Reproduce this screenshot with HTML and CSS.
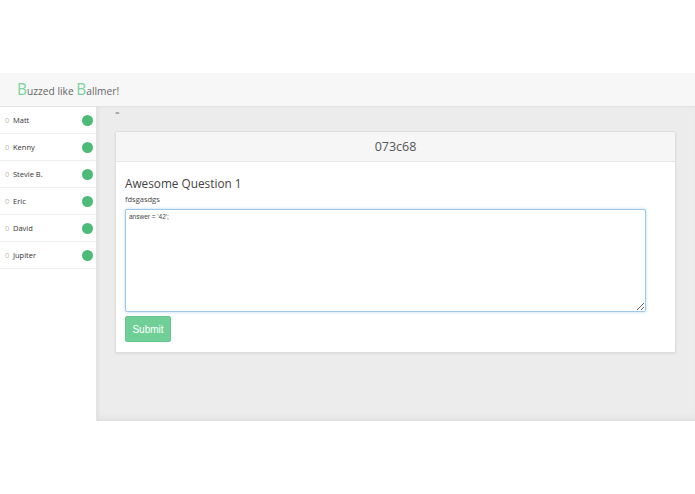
FILE: index.html
```html
<!DOCTYPE html>
<html>
<head>
<meta charset="utf-8">
<link rel="stylesheet" href="styles.css">
</head>
<body>
<div class="top-space"></div>
<header class="navbar">
  <span class="brand"><span class="big">B</span>uzzed like <span class="big">B</span>allmer!</span>
</header>
<div class="layout">
  <aside class="sidebar">
    <div class="player"><span class="score">0</span><span class="name">Matt</span><span class="dot"></span></div>
    <div class="player"><span class="score">0</span><span class="name">Kenny</span><span class="dot"></span></div>
    <div class="player"><span class="score">0</span><span class="name">Stevie B.</span><span class="dot"></span></div>
    <div class="player"><span class="score">0</span><span class="name">Eric</span><span class="dot"></span></div>
    <div class="player"><span class="score">0</span><span class="name">David</span><span class="dot"></span></div>
    <div class="player"><span class="score">0</span><span class="name">Jupiter</span><span class="dot"></span></div>
  </aside>
  <main class="main">
    <div class="eq">=</div>
    <section class="card">
      <div class="card-head">073c68</div>
      <div class="card-body">
        <h2 class="q-title">Awesome Question 1</h2>
        <p class="q-desc">fdsgasdgs</p>
        <textarea class="answer">answer = '42';</textarea>
        <button class="submit">Submit</button>
      </div>
    </section>
  </main>
</div>
</body>
</html>
```

FILE: styles.css
```css
html, body {
  margin: 0;
  padding: 0;
  background: #ffffff;
}
body {
  font-family: "Open Sans", "Liberation Sans", sans-serif;
  color: #555;
}
.top-space {
  height: 73px;
}
.navbar {
  background: #f7f7f7;
  border-bottom: 1px solid #e3e3e3;
  display: flex;
  align-items: center;
  padding-left: 17px;
  box-sizing: border-box;
  height: 34px;
}
.brand {
  font-size: 10.2px;
  color: #666;
  padding-bottom: 1px;
}
.brand .big {
  font-size: 15.5px;
  color: #7bd39f;
}
.layout {
  display: flex;
  height: 314px;
}
.sidebar {
  width: 97px;
  flex: none;
  background: #fff;
  border-right: 1px solid #e4e4e4;
  box-sizing: border-box;
}
.player {
  height: 27px;
  display: flex;
  align-items: center;
  border-bottom: 1px solid #eeeeee;
  box-sizing: border-box;
  padding-left: 5px;
  padding-right: 3px;
  font-size: 7.5px;
}
.score {
  color: #bbb;
  width: 8px;
}
.name {
  color: #333;
  flex: 1;
}
.dot {
  width: 11px;
  height: 11px;
  border-radius: 50%;
  background: #4dbb78;
}
.main {
  flex: 1;
  background: #ececec;
  padding: 0 19px 0 18px;
  box-shadow: inset 2px 0 3px rgba(0,0,0,0.04), inset 0 -6px 6px -4px rgba(0,0,0,0.06);
}
.eq {
  font-size: 8px;
  color: #777;
  height: 24px;
  line-height: 10px;
}
.card {
  background: #fff;
  border: 1px solid #dedede;
  border-radius: 2px;
  box-shadow: 0 1px 2px rgba(0,0,0,0.08);
}
.card-head {
  height: 29px;
  background: #f6f6f6;
  border-bottom: 1px solid #e6e6e6;
  text-align: center;
  line-height: 29px;
  font-size: 12.5px;
  color: #555;
}
.card-body {
  padding: 13px 29px 10px 9px;
}
.q-title {
  margin: 0;
  font-weight: 400;
  font-size: 11.8px;
  color: #444;
  line-height: 17px;
}
.q-desc {
  margin: 2px 0 0;
  font-size: 7.5px;
  color: #444;
  line-height: 10px;
}
.answer {
  display: block;
  width: 100%;
  box-sizing: border-box;
  height: 103px;
  margin-top: 5px;
  border: 1px solid #9ec8ea;
  border-radius: 2px;
  box-shadow: 0 0 3px rgba(102,175,233,0.5);
  font-family: "Liberation Sans", sans-serif;
  font-size: 6.5px;
  color: #444;
  padding: 3px 3px;
  resize: vertical;
  outline: none;
}
.submit {
  display: block;
  margin-top: 4px;
  width: 46px;
  height: 26px;
  background: #6fcf97;
  border: 1px solid #66c68d;
  border-radius: 2px;
  color: #fff;
  font-family: "Liberation Sans", sans-serif;
  font-size: 10px;
  padding: 0;
}
```
